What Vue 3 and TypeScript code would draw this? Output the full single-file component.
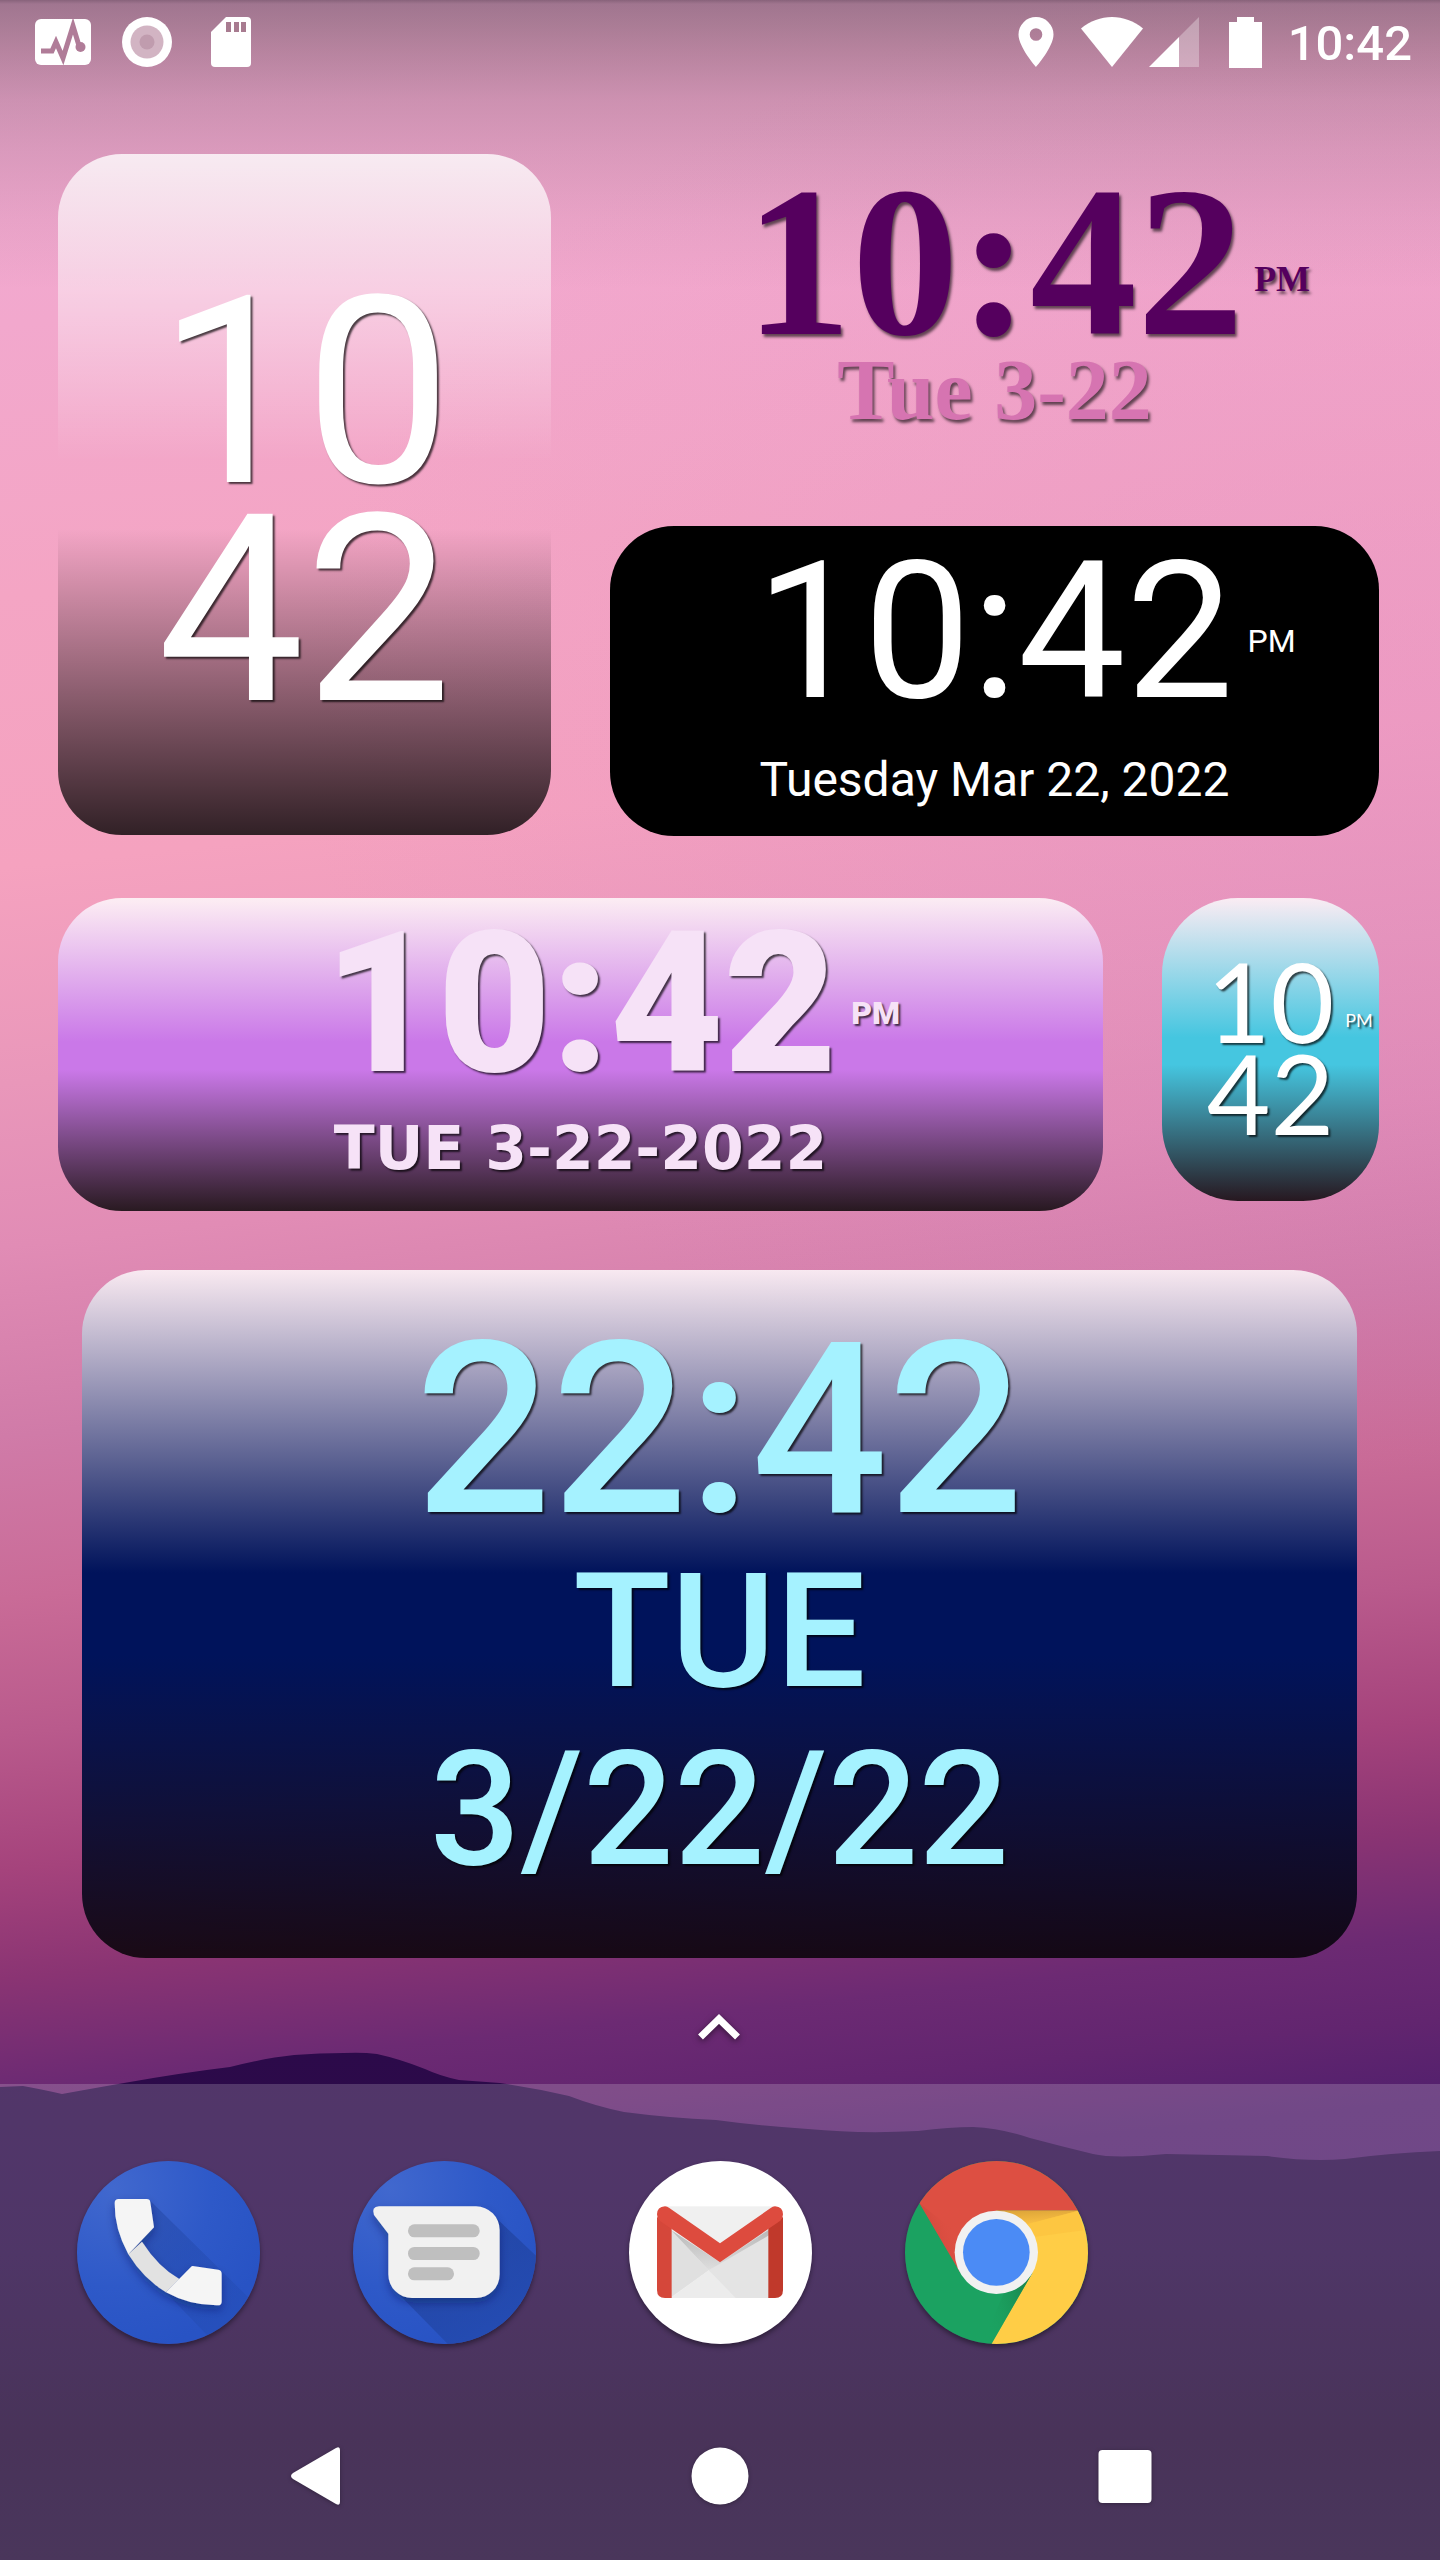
<script setup lang="ts">
interface ClockFace {
  hours: string
  hours24: string
  minutes: string
  period: string
}

const now: ClockFace = { hours: '10', hours24: '22', minutes: '42', period: 'PM' }
const clock = `${now.hours}:${now.minutes}`
const clock24 = `${now.hours24}:${now.minutes}`
</script>

<template>
  <div class="screen">
    <svg class="hills" viewBox="0 2040 1440 520" preserveAspectRatio="none" aria-hidden="true">
      <defs>
        <linearGradient id="hill" x1="0" y1="0" x2="0" y2="1">
          <stop offset="0" stop-color="#2c0a4a" />
          <stop offset=".4" stop-color="#290a46" />
          <stop offset=".75" stop-color="#210735" />
          <stop offset="1" stop-color="#230a38" />
        </linearGradient>
      </defs>
      <path
        fill="url(#hill)"
        d="M0 2087L23 2086Q45 2090 62 2094Q95 2088 124 2083Q180 2073 230 2067Q265 2058 294 2055Q320 2053 344 2053Q362 2052 377 2054Q400 2059 425 2069Q440 2076 459 2080L500 2083Q535 2088 569 2096Q595 2106 624 2112Q670 2118 716 2120Q760 2126 808 2129Q860 2134 918 2131Q950 2127 973 2127Q1000 2128 1030 2138Q1060 2146 1093 2154Q1115 2159 1166 2154Q1220 2155 1267 2156Q1310 2162 1345 2159Q1390 2153 1440 2151V2560H0Z"
      />
    </svg>

    <header class="status">
      <div class="status-left">
        <svg width="56" height="50" viewBox="0 0 56 50" role="img" aria-label="Activity monitor">
          <rect x="0" y="2" width="56" height="46" rx="6" fill="#fff" />
          <path d="M6 34H17L21 25L28 41L38 9L45 32" fill="none" stroke="#b07c98" stroke-width="5" />
          <circle cx="45.500" cy="30" r="5" fill="#b07c98" />
        </svg>
        <svg width="56" height="50" viewBox="0 0 56 50" role="img" aria-label="Recording">
          <circle cx="28" cy="25" r="25" fill="#fff" />
          <circle cx="28" cy="25" r="16.500" fill="#d2b4c3" />
          <circle cx="28" cy="25" r="7.500" fill="#c09cae" />
        </svg>
        <svg width="56" height="50" viewBox="0 0 56 50" role="img" aria-label="Storage card">
          <path d="M23 0H44Q48 0 48 4V46Q48 50 44 50H12Q8 50 8 46V15Z" fill="#fff" />
          <path d="M23 5h5v10h-5zM31 5h5v10h-5zM38 5h5v10h-5z" fill="#a87b90" />
        </svg>
      </div>
      <div class="status-right">
        <svg width="36" height="50" viewBox="0 0 36 50" role="img" aria-label="Location on">
          <path fill="#fff" fill-rule="evenodd" d="M18 0A17.500 17.500 0 0 0 .5 17.500C.5 30 18 50 18 50S35.500 30 35.500 17.500A17.500 17.500 0 0 0 18 0ZM18 11.200a6.300 6.300 0 1 1 0 12.600a6.300 6.300 0 0 1 0-12.600Z" />
        </svg>
        <svg class="wifi" width="62" height="50" viewBox="0 0 62 50" role="img" aria-label="Wi-Fi">
          <path fill="#fff" d="M31 50L0 11.500C9 4 20 0 31 0S53 4 62 11.500Z" />
        </svg>
        <svg class="signal" width="50" height="50" viewBox="0 0 50 50" role="img" aria-label="Mobile signal">
          <path fill="#fff" fill-opacity=".3" d="M50 0V50H30V20Z" />
          <path fill="#fff" d="M0 50H30V20Z" />
        </svg>
        <svg class="battery" width="33" height="51" viewBox="0 0 33 51" role="img" aria-label="Battery full">
          <path fill="#fff" d="M8 0H25V5H33V51H0V5H8Z" />
        </svg>
        <time class="status-time">{{ clock }}</time>
      </div>
    </header>

    <main class="home">
      <div class="row row-top">
        <section class="card stacked-clock">
          <span>{{ now.hours }}</span>
          <span>{{ now.minutes }}</span>
        </section>

        <div class="column">
          <section class="fancy-clock">
            <div class="time-line">
              <time class="fancy-time">{{ clock }}</time>
              <span class="period fancy-period">{{ now.period }}</span>
            </div>
            <p class="fancy-date">Tue 3-22</p>
          </section>

          <section class="card black-clock">
            <div class="time-line">
              <time class="black-time">{{ clock }}</time>
              <span class="period">{{ now.period }}</span>
            </div>
            <p class="black-date">Tuesday Mar 22, 2022</p>
          </section>
        </div>
      </div>

      <div class="row row-middle">
        <section class="card purple-clock">
          <div class="time-line">
            <time class="purple-time">{{ clock }}</time>
            <span class="period">{{ now.period }}</span>
          </div>
          <p class="purple-date">TUE 3-22-2022</p>
        </section>

        <section class="card mini-clock">
          <div class="mini-stack">
            <span>{{ now.hours }}</span>
            <span>{{ now.minutes }}</span>
          </div>
          <span class="mini-period">{{ now.period }}</span>
        </section>
      </div>

      <section class="card digital-clock">
        <time class="digital-time">{{ clock24 }}</time>
        <p class="digital-date">TUE</p>
        <p class="digital-date">3/22/22</p>
      </section>

      <button class="drawer-handle" type="button" aria-label="Open all apps">
        <svg width="44" height="28" viewBox="0 0 44 28">
          <path d="M3.500 24L22 6L40.500 24" fill="none" stroke="#fff" stroke-width="7" />
        </svg>
      </button>
    </main>

    <footer class="bottom">
      <nav class="dock" aria-label="Favourite apps">
        <button type="button" class="app" aria-label="Phone">
          <svg viewBox="51 62 549 549">
            <defs>
              <radialGradient id="blue-disc" cx=".2" cy=".15" r=".9">
                <stop offset="0" stop-color="#4168ce" />
                <stop offset=".6" stop-color="#2e59c8" />
                <stop offset="1" stop-color="#2853c4" />
              </radialGradient>
              <linearGradient id="phone-shade" x1="0" y1="0" x2="1" y2="1">
                <stop offset="0" stop-color="#1f3f96" stop-opacity=".45" />
                <stop offset="1" stop-color="#2450bd" stop-opacity=".3" />
              </linearGradient>
              <clipPath id="phone-clip"><circle cx="325.500" cy="336.500" r="274.500" /></clipPath>
              <filter id="soft" x="-20%" y="-20%" width="150%" height="160%">
                <feDropShadow dx="0" dy="14" stdDeviation="14" flood-color="#0a1c50" flood-opacity=".4" />
              </filter>
            </defs>
            <circle cx="325.500" cy="336.500" r="274.500" fill="url(#blue-disc)" />
            <g clip-path="url(#phone-clip)">
              <path fill="url(#phone-shade)" d="M268 178L640 545V790L205 340L245 302Z" />
              <g filter="url(#soft)">
                <path fill="#e2e2e2" d="M205 342L246 304Q295 380 358 416L318 456Q250 415 205 342Z" />
                <path fill="#f5f5f5" d="M176 176H260Q270 176 271 186L282 261L205 342Q163 265 164 188Q164 176 176 176Z" />
                <path fill="#f5f5f5" d="M398 377L475 388Q485 389 485 400V484Q485 495 473 495Q390 496 318 456L392 381Q395 377 398 377Z" />
              </g>
            </g>
          </svg>
        </button>
        <button type="button" class="app" aria-label="Messages">
          <svg viewBox="879 62 549 549">
            <defs>
              <clipPath id="message-clip"><circle cx="1153.500" cy="336.500" r="274.500" /></clipPath>
              <linearGradient id="message-shade" x1="0" y1="0" x2=".6" y2="1">
                <stop offset=".3" stop-color="#1f3f98" stop-opacity=".65" />
                <stop offset="1" stop-color="#244db4" stop-opacity=".7" />
              </linearGradient>
            </defs>
            <circle cx="1153.500" cy="336.500" r="274.500" fill="url(#blue-disc)" />
            <g clip-path="url(#message-clip)">
              <path fill="url(#message-shade)" d="M1300 225L1500 415V760H1310L1005 450Z" />
              <path filter="url(#soft)" fill="#f1f1f1" d="M957 198H1248A71 71 0 0 1 1319 269V402A71 71 0 0 1 1248 473H1056A71 71 0 0 1 985 402V280L942 224Q933 200 957 198Z" />
              <g fill="#bfbfbf">
                <rect x="1044" y="252" width="215" height="39" rx="19" />
                <rect x="1044" y="320" width="215" height="39" rx="19" />
                <rect x="1044" y="381" width="138" height="39" rx="19" />
              </g>
            </g>
          </svg>
        </button>
        <button type="button" class="app" aria-label="Gmail">
          <svg viewBox="87 62 549 549">
            <defs>
              <linearGradient id="flap-shade" x1="0" y1="0" x2="0" y2="1">
                <stop offset="0" stop-color="#b8b8b8" />
                <stop offset="1" stop-color="#dedede" />
              </linearGradient>
            </defs>
            <circle cx="361.500" cy="336.500" r="274.500" fill="#fff" />
            <rect x="196" y="198" width="330" height="275" fill="#f0f0f0" />
            <path fill="#e0e0e0" d="M214 270L326 390L214 470Z" />
            <path fill="#ececec" d="M214 473L326 390L407 473Z" />
            <path fill="#e4e4e4" d="M326 390L507 262V473H407Z" />
            <path fill="url(#flap-shade)" d="M214 270L360 366L507 268V285L326 390Z" />
            <path fill="#d5473a" d="M171 230L215 262V473H195Q171 473 171 449Z" />
            <path fill="#c0392b" d="M505 262L549 230V449Q549 473 525 473H505Z" />
            <path fill="#dd4b3e" d="M195 198Q202 198 208 203L360 309L512 203Q518 198 525 198Q549 200 549 222Q549 234 541 241L360 366L179 241Q171 234 171 222Q171 200 195 198Z" />
          </svg>
        </button>
        <button type="button" class="app" aria-label="Chrome">
          <svg viewBox="915 62 549 549">
            <defs>
              <clipPath id="chrome-clip"><circle cx="1189.500" cy="336.500" r="274.500" /></clipPath>
              <linearGradient id="red-shade" x1="0" y1="1" x2=".8" y2=".5">
                <stop offset=".1" stop-color="#a8372a" stop-opacity=".75" />
                <stop offset="1" stop-color="#dd4f42" stop-opacity="0" />
              </linearGradient>
              <linearGradient id="yellow-shade" x1="0" y1="0" x2=".3" y2="1">
                <stop offset="0" stop-color="#dba338" />
                <stop offset="1" stop-color="#fbc043" />
              </linearGradient>
              <linearGradient id="green-shade" x1="1" y1="0" x2="0" y2=".3">
                <stop offset="0" stop-color="#187a46" />
                <stop offset="1" stop-color="#1ba15f" stop-opacity="0" />
              </linearGradient>
            </defs>
            <g clip-path="url(#chrome-clip)">
              <rect x="915" y="62" width="549" height="549" fill="#1ba261" />
              <path fill="#dd4f42" d="M900 62H1464V211H1189V340L1080 396L958 188Z" />
              <path fill="url(#red-shade)" d="M958 188L1100 300L1080 396Z" />
              <path fill="#ffcd46" d="M1189 211H1480V640H1158L1297 398Z" />
              <path fill="url(#yellow-shade)" d="M1189 211H1435L1270 255Z" />
              <path fill="#fbc03c" fill-opacity=".5" d="M1435 211L1450 270L1300 290L1280 252Z" />
              <path fill="url(#green-shade)" d="M1297 398L1173 613H1145L1215 450Z" />
            </g>
            <circle cx="1189" cy="336" r="125" fill="#f1f1f1" />
            <circle cx="1189" cy="336" r="100" fill="#4b8bf5" />
          </svg>
        </button>
      </nav>

      <nav class="system-nav" aria-label="System navigation">
        <button type="button" aria-label="Back">
          <svg width="58" height="58" viewBox="0 0 58 58">
            <path fill="#fff" d="M50 1Q54 -1 54 3V55Q54 59 50 57L7 32Q3 29 7 26Z" />
          </svg>
        </button>
        <button type="button" aria-label="Home">
          <svg width="58" height="58" viewBox="0 0 58 58">
            <circle cx="29" cy="29" r="28.500" fill="#fff" />
          </svg>
        </button>
        <button type="button" aria-label="Recent apps">
          <svg width="58" height="58" viewBox="0 0 58 58">
            <rect x="2.500" y="3" width="53" height="53" rx="4" fill="#fff" />
          </svg>
        </button>
      </nav>
    </footer>
  </div>
</template>

<style>
html,
body,
#app {
  margin: 0;
}
</style>

<style scoped>
.screen {
  position: relative;
  display: flex;
  flex-direction: column;
  min-height: 100vh;
  overflow: hidden;
  color: #fff;
  font-family: Roboto, 'Liberation Sans', sans-serif;
  background:
    linear-gradient(180deg, rgba(50, 40, 50, 0.55) 0, rgba(50, 45, 50, 0.42) 4px, rgba(55, 50, 50, 0.38) 25px, rgba(60, 50, 50, 0.32) 50px, rgba(60, 50, 50, 0.2) 100px, rgba(60, 50, 50, 0.13) 150px, rgba(60, 50, 50, 0.05) 220px, rgba(60, 50, 50, 0) 290px),
    radial-gradient(80% 30% at 100% 28%, rgba(205, 125, 205, 0.22) 0, rgba(205, 125, 205, 0) 100%),
    linear-gradient(174deg, #f0aad4 0, #f2a8cd 12%, #f4a5c4 22%, #f5a2bf 32%, #e997ba 40%, #e18cb5 46%, #d07ba8 53%, #c96b97 59%, #b95a8c 64%, #a5437c 69%, #8a3473 73%, #6c2a73 77%, #62256f 80%, #52206d 83%, #4a1c6c 100%);
}

.hills {
  position: absolute;
  right: 0;
  bottom: 0;
  left: 0;
  width: 100%;
  height: 520px;
}

p {
  margin: 0;
}

svg {
  display: block;
}

button {
  padding: 0;
  border: 0;
  background: none;
  cursor: pointer;
}

.status {
  display: flex;
  justify-content: space-between;
  height: 84px;
  padding: 0 28px 0 35px;
  align-items: center;
}

.status-left,
.status-right {
  display: flex;
  align-items: center;
}

.status-left {
  gap: 28px;
}

.wifi {
  margin-left: 27px;
}

.signal {
  margin-left: 6px;
}

.battery {
  margin-left: 30px;
}

.status-time {
  padding-top: 3px;
  margin-left: 26px;
  font-size: 49px;
  font-weight: 500;
  line-height: 56px;
}

.home {
  position: relative;
  display: flex;
  flex: 1;
  flex-direction: column;
  padding: 70px 61px 0 58px;
}

.row {
  display: grid;
  column-gap: 59px;
  align-items: start;
}

.row-top {
  grid-template-columns: 493fr 769fr;
  margin-bottom: 62px;
}

.row-middle {
  grid-template-columns: 1045fr 217fr;
  margin-bottom: 59px;
}

.card {
  border-radius: 64px;
}

.stacked-clock,
.mini-clock,
.purple-clock,
.digital-clock {
  text-shadow: 2px 2px 2px rgba(0, 0, 0, 0.7);
}

.stacked-clock {
  display: flex;
  flex-direction: column;
  align-items: center;
  padding: 130px 0 115px;
  font-size: 262px;
  line-height: 218px;
  background: linear-gradient(180deg, rgba(255, 255, 255, 0.8) 0, rgba(255, 255, 255, 0) 45%, rgba(0, 0, 0, 0) 55%, rgba(0, 0, 0, 0.8) 100%);
}

.column {
  display: flex;
  flex-direction: column;
}

.time-line {
  display: grid;
  grid-template-columns: 1fr auto 1fr;
  align-items: center;
  line-height: 170px;
}

.time-line time {
  grid-column: 2;
}

.period {
  padding-top: 18px;
  margin-left: 14px;
  font-size: 32px;
  line-height: 40px;
}

.fancy-clock {
  height: 344px;
  padding-top: 28px;
  color: #55005e;
  font-family: 'Liberation Serif', serif;
  font-weight: 700;
  text-align: center;
  text-shadow: 2px 3px 3px rgba(0, 0, 0, 0.6);
}

.fancy-clock .time-line {
  line-height: 160px;
}

.fancy-time {
  font-size: 214px;
}

.fancy-period {
  padding-top: 34px;
  margin-left: 10px;
  font-size: 36px;
  text-align: left;
}

.fancy-date {
  margin-top: 8px;
  color: #d674b1;
  font-size: 86px;
  line-height: 80px;
}

.black-clock {
  padding: 21px 0 28px;
  background: #000;
}

.black-time {
  font-size: 192px;
}

.black-date {
  margin-top: 35px;
  font-size: 48px;
  line-height: 56px;
  text-align: center;
}

.purple-clock {
  padding: 21px 0 27px;
  color: #f6e2f7;
  font-weight: 900;
  background: linear-gradient(180deg, rgba(255, 255, 255, 0.82) 0, #ca78e8 46%, #ca78e8 55%, rgba(0, 0, 0, 0.82) 100%);
}

.purple-time {
  font-size: 196px;
}

.purple-date {
  margin-top: 23px;
  font-family: 'DejaVu Sans', Roboto, sans-serif;
  font-size: 60px;
  font-weight: 700;
  line-height: 72px;
  text-align: center;
}

.mini-clock {
  display: grid;
  grid-template-columns: 1fr auto 1fr;
  padding: 56px 0 63px;
  border-radius: 76px;
  font-family: Lato, Roboto, sans-serif;
  font-weight: 400;
  background: linear-gradient(180deg, rgba(255, 255, 255, 0.82) 0, #45c6e0 46%, #45c6e0 55%, rgba(0, 0, 0, 0.82) 100%);
}

.mini-stack {
  display: flex;
  grid-column: 2;
  flex-direction: column;
  font-size: 110px;
  line-height: 92px;
}

.mini-period {
  padding-top: 54px;
  margin-left: 11px;
  font-size: 18px;
  line-height: 24px;
}

.digital-clock {
  display: flex;
  flex-direction: column;
  align-items: center;
  gap: 18px;
  margin: 0 22px 0 24px;
  padding: 56px 0 68px;
  color: #a5f2ff;
  font-weight: 500;
  background: linear-gradient(180deg, rgba(255, 255, 255, 0.82) 0, #00135b 44%, #00135b 56%, rgba(0, 0, 0, 0.82) 100%);
}

.digital-time {
  font-size: 240px;
  line-height: 208px;
}

.digital-date {
  font-size: 160px;
  line-height: 160px;
}

.drawer-handle {
  display: flex;
  align-self: center;
  padding: 55px 40px 43px;
  filter: drop-shadow(0 2px 3px rgba(0, 0, 0, 0.5));
}

.bottom {
  position: relative;
  background: rgba(255, 255, 255, 0.18);
}

.dock {
  display: grid;
  grid-template-columns: repeat(5, 1fr);
  justify-items: center;
  padding: 77px 30px 48px;
}

.app {
  width: 183px;
  height: 183px;
  border-radius: 50%;
  box-shadow: 0 3px 5px rgba(0, 0, 0, 0.4);
}

.system-nav {
  display: flex;
  justify-content: space-around;
  align-items: center;
  height: 168px;
  padding: 0 112px;
}

.system-nav svg {
  filter: drop-shadow(0 1px 2px rgba(0, 0, 0, 0.3));
}
</style>
